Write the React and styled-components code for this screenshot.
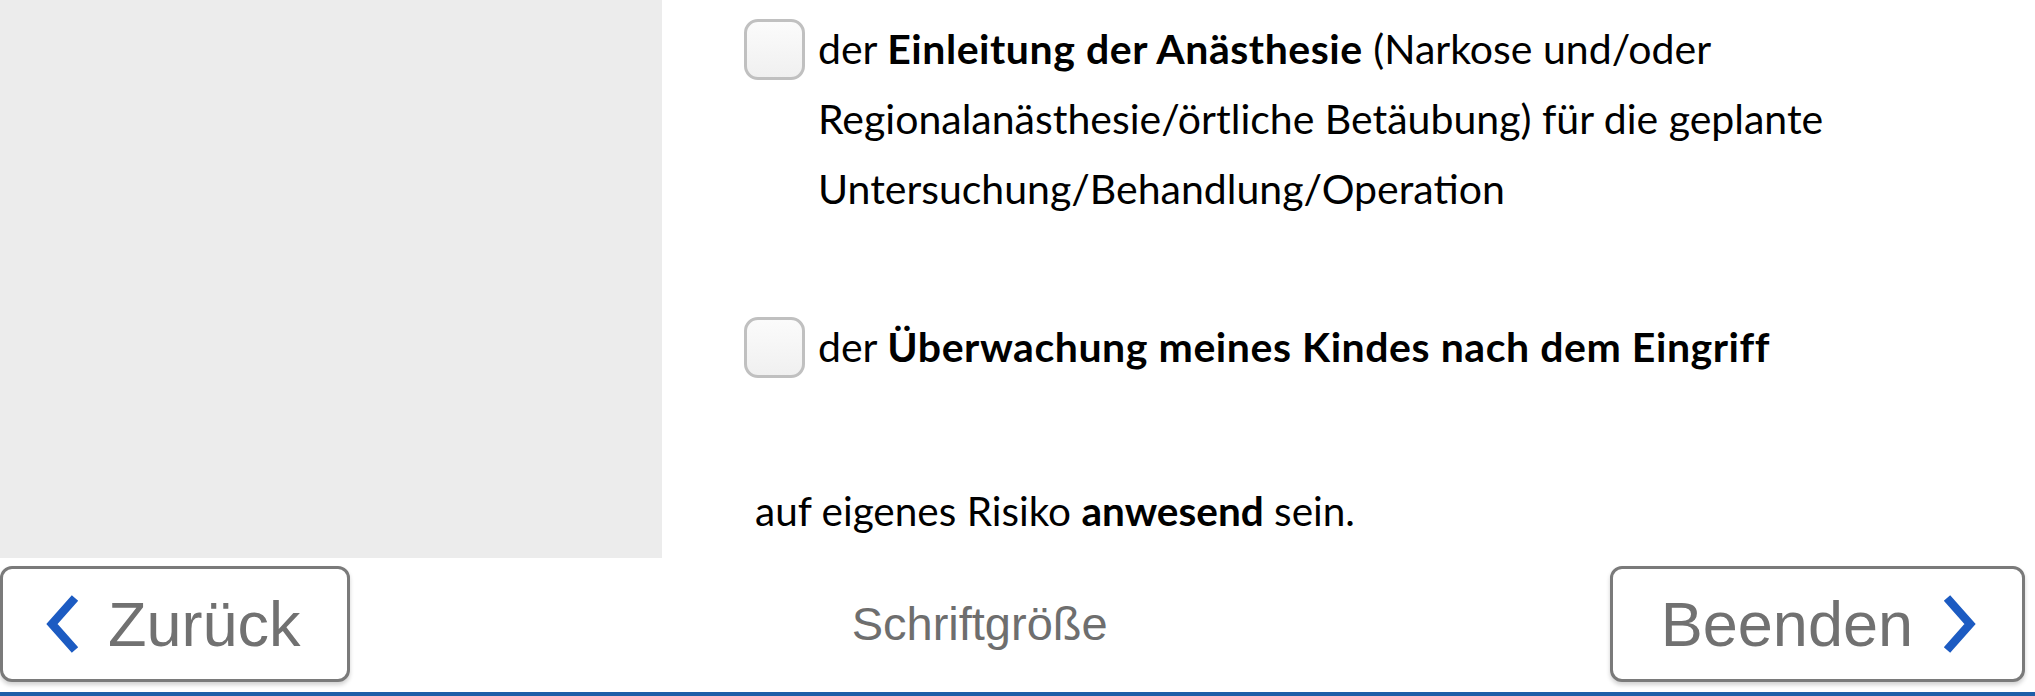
import styled, { createGlobalStyle } from 'styled-components'

const GlobalStyle = createGlobalStyle`
  html, body {
    margin: 0;
    padding: 0;
    height: 100%;
    overflow: hidden;
    background: #ffffff;
  }
  #root {
    height: 100%;
  }
`

const Page = styled.div`
  display: flex;
  flex-direction: column;
  height: 100vh;
  font-family: Lato, 'Noto Sans', sans-serif;
  color: #000000;
`

const Main = styled.div`
  flex: 1;
  display: grid;
  grid-template-columns: 662px 1fr;
  min-height: 0;
  overflow: hidden;
`

const SidePanel = styled.aside`
  background: #ececec;
`

const Content = styled.section`
  display: flex;
  flex-direction: column;
  padding: 14px 40px 0 82px;
`

const OptionRow = styled.label`
  display: flex;
  align-items: flex-start;
  gap: 13px;
  margin-bottom: ${({ $space }) => $space}px;
`

const Checkbox = styled.span`
  flex: none;
  box-sizing: border-box;
  width: 61px;
  height: 61px;
  margin-top: 5px;
  border: 3px solid #c0c0c0;
  border-radius: 14px;
  background: linear-gradient(#fbfbfb, #f0f0f0);
`

const OptionText = styled.p`
  margin: 0;
  max-width: 1020px;
  font-size: 41px;
  line-height: 70px;

  b {
    letter-spacing: 0.55px;
  }
`

const Closing = styled(OptionText)`
  margin-left: 11px;
  font-size: 40.5px;

  b {
    letter-spacing: 0;
  }
`

const Footer = styled.footer`
  flex: none;
  display: flex;
  align-items: center;
  justify-content: space-between;
  height: 138px;
  box-sizing: border-box;
  padding: 1px 10px 4px 0;
  border-bottom: 4px solid #1d5ea8;
  font-family: 'Liberation Sans', Arial, sans-serif;
  color: #707070;
`

const NavButton = styled.button`
  display: flex;
  align-items: center;
  gap: ${({ $gap }) => $gap}px;
  height: 116px;
  box-sizing: border-box;
  padding: 0 46px 0 ${({ $padLeft }) => $padLeft}px;
  border: 3px solid #7a7a7a;
  border-radius: 12px;
  background: #ffffff;
  box-shadow: 0 3px 4px rgba(0, 0, 0, 0.18);
  font-family: inherit;
  font-size: 63px;
  color: #717171;
  cursor: pointer;
`

const FontSizeLabel = styled.span`
  font-size: 47px;
  color: #6e6e6e;
`

const Chevron = ({ dir }) => (
  <svg width="34" height="60" viewBox="0 0 34 60" fill="none">
    <path
      d={dir === 'left' ? 'M29 4 L6 30 L29 56' : 'M5 4 L28 30 L5 56'}
      stroke="#1c5bc2"
      strokeWidth="8.5"
      strokeLinecap="butt"
      strokeLinejoin="miter"
    />
  </svg>
)

function App() {
  return (
    <Page>
      <GlobalStyle />
      <Main>
        <SidePanel />
        <Content>
          <OptionRow $space={88}>
            <Checkbox />
            <OptionText>
              der <b>Einleitung der Anästhesie</b> (Narkose und/oder
              Regionalanästhesie/örtliche Betäubung) für die geplante
              Untersuchung/Behandlung/Operation
            </OptionText>
          </OptionRow>
          <OptionRow $space={94}>
            <Checkbox />
            <OptionText>
              der <b>Überwachung meines Kindes nach dem Eingriff</b>
            </OptionText>
          </OptionRow>
          <Closing>
            auf eigenes Risiko <b>anwesend</b> sein.
          </Closing>
        </Content>
      </Main>
      <Footer>
        <NavButton $padLeft={43} $gap={28}>
          <Chevron dir="left" />
          Zurück
        </NavButton>
        <FontSizeLabel>Schriftgröße</FontSizeLabel>
        <NavButton $padLeft={48} $gap={29}>
          Beenden
          <Chevron dir="right" />
        </NavButton>
      </Footer>
    </Page>
  )
}

export default App
